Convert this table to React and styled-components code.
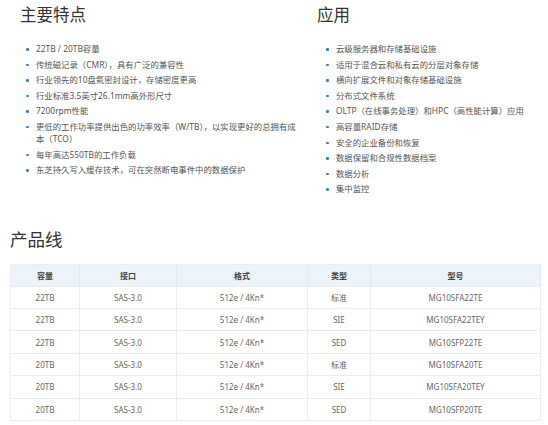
import React from "react";
import styled, { createGlobalStyle } from "styled-components";

const GlobalStyle = createGlobalStyle`
  html, body {
    margin: 0;
    padding: 0;
    background: #fff;
  }
  body {
    font-family: "Noto Sans", "Noto Sans CJK SC", sans-serif;
    color: #555;
  }
`;

const Page = styled.div`
  width: 548px;
  height: 425px;
  overflow: hidden;
  padding: 0 8px 0 10px;
  box-sizing: border-box;
`;

const Features = styled.div`
  display: grid;
  grid-template-columns: 297px 1fr;
  padding-left: 10px;
`;

const Column = styled.div`
  display: flex;
  flex-direction: column;
`;

const Heading = styled.h2`
  margin: 3px 0 0;
  font-size: 16.5px;
  line-height: 22px;
  font-weight: 400;
  color: #333;
  font-family: "Noto Sans CJK SC", sans-serif;
`;

const List = styled.ul`
  list-style: none;
  margin: 18px 0 0;
  padding: 0 0 0 ${(p) => p.$indent}px;
  display: flex;
  flex-direction: column;
  gap: 3.3px;
`;

const Item = styled.li`
  position: relative;
  padding-left: 10px;
  font-size: 8.4px;
  line-height: 12.3px;
  color: #555;
  padding-right: ${(p) => (p.$wrap ? "20px" : "0")};

  &::before {
    content: "";
    position: absolute;
    left: 0;
    top: 5px;
    width: 2.5px;
    height: 2.5px;
    border-radius: 50%;
    background: #3b78d0;
  }
`;

const SectionTitle = styled.h2`
  margin: 31px 0 0;
  font-size: 17.5px;
  line-height: 24px;
  font-weight: 400;
  color: #333;
  font-family: "Noto Sans CJK SC", sans-serif;
`;

const Table = styled.table`
  margin-top: 13px;
  width: 530px;
  border-collapse: collapse;
  table-layout: fixed;
  font-size: 8px;
  border: 1px solid #ededed;
`;

const Th = styled.th`
  background: #edf3fb;
  height: 21px;
  padding: 0;
  font-weight: 700;
  color: #444;
  text-align: center;
  border-right: 1px solid #e4e9f0;
`;

const Td = styled.td`
  height: 21.4px;
  padding: 0;
  text-align: center;
  color: #666;
  border-top: 1px solid #ececec;
  border-right: 1px solid #ececec;
`;

const left = [
  "22TB / 20TB容量",
  "传统磁记录（CMR），具有广泛的兼容性",
  "行业领先的10盘氦密封设计，存储密度更高",
  "行业标准3.5英寸26.1mm高外形尺寸",
  "7200rpm性能",
  "更低的工作功率提供出色的功率效率（W/TB），以实现更好的总拥有成本（TCO）",
  "每年高达550TB的工作负载",
  "东芝持久写入缓存技术，可在突然断电事件中的数据保护",
];

const right = [
  "云级服务器和存储基础设施",
  "适用于混合云和私有云的分层对象存储",
  "横向扩展文件和对象存储基础设施",
  "分布式文件系统",
  "OLTP（在线事务处理）和HPC（高性能计算）应用",
  "高容量RAID存储",
  "安全的企业备份和恢复",
  "数据保留和合规性数据档案",
  "数据分析",
  "集中监控",
];

const columns = [
  { label: "容量", width: 69 },
  { label: "接口", width: 97 },
  { label: "格式", width: 131 },
  { label: "类型", width: 63 },
  { label: "型号", width: 170 },
];

const rows = [
  ["22TB", "SAS-3.0", "512e / 4Kn*", "标准", "MG10SFA22TE"],
  ["22TB", "SAS-3.0", "512e / 4Kn*", "SIE", "MG10SFA22TEY"],
  ["22TB", "SAS-3.0", "512e / 4Kn*", "SED", "MG10SFP22TE"],
  ["20TB", "SAS-3.0", "512e / 4Kn*", "标准", "MG10SFA20TE"],
  ["20TB", "SAS-3.0", "512e / 4Kn*", "SIE", "MG10SFA20TEY"],
  ["20TB", "SAS-3.0", "512e / 4Kn*", "SED", "MG10SFP20TE"],
];

export default function App() {
  return (
    <Page>
      <GlobalStyle />
      <Features>
        <Column>
          <Heading>主要特点</Heading>
          <List $indent={6}>
            {left.map((t) => (
              <Item key={t} $wrap>{t}</Item>
            ))}
          </List>
        </Column>
        <Column>
          <Heading>应用</Heading>
          <List $indent={9}>
            {right.map((t) => (
              <Item key={t}>{t}</Item>
            ))}
          </List>
        </Column>
      </Features>
      <SectionTitle>产品线</SectionTitle>
      <Table>
        <colgroup>
          {columns.map((c) => (
            <col key={c.label} style={{ width: c.width }} />
          ))}
        </colgroup>
        <thead>
          <tr>
            {columns.map((c) => (
              <Th key={c.label}>{c.label}</Th>
            ))}
          </tr>
        </thead>
        <tbody>
          {rows.map((r, i) => (
            <tr key={i}>
              {r.map((v, j) => (
                <Td key={j}>{v}</Td>
              ))}
            </tr>
          ))}
        </tbody>
      </Table>
    </Page>
  );
}
